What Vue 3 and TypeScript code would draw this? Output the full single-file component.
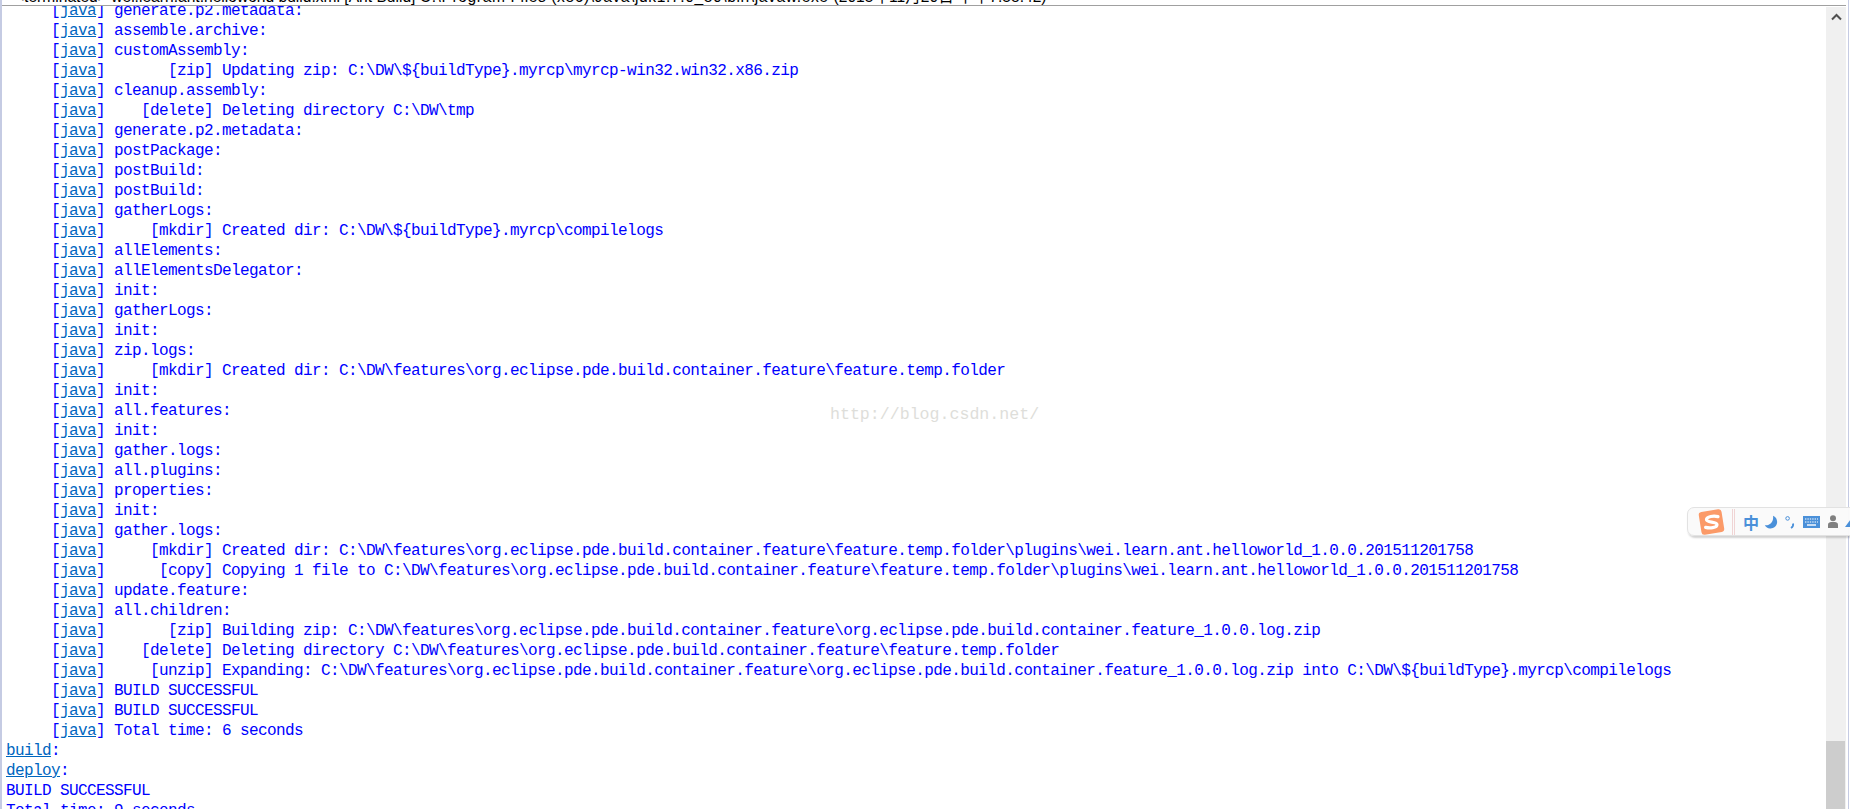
<script setup lang="ts">
interface Line {
  java: boolean
  link?: string
  text: string
}

const feature = 'C:\\DW\\features\\org.eclipse.pde.build.container.feature'
const tempFolder = feature + '\\feature.temp.folder'
const logZip = feature + '\\org.eclipse.pde.build.container.feature_1.0.0.log.zip'
const pluginDir = tempFolder + '\\plugins\\wei.learn.ant.helloworld_1.0.0.201511201758'

const javaLines: string[] = [
  'generate.p2.metadata:',
  'assemble.archive:',
  'customAssembly:',
  '      [zip] Updating zip: C:\\DW\\${buildType}.myrcp\\myrcp-win32.win32.x86.zip',
  'cleanup.assembly:',
  '   [delete] Deleting directory C:\\DW\\tmp',
  'generate.p2.metadata:',
  'postPackage:',
  'postBuild:',
  'postBuild:',
  'gatherLogs:',
  '    [mkdir] Created dir: C:\\DW\\${buildType}.myrcp\\compilelogs',
  'allElements:',
  'allElementsDelegator:',
  'init:',
  'gatherLogs:',
  'init:',
  'zip.logs:',
  '    [mkdir] Created dir: ' + tempFolder,
  'init:',
  'all.features:',
  'init:',
  'gather.logs:',
  'all.plugins:',
  'properties:',
  'init:',
  'gather.logs:',
  '    [mkdir] Created dir: ' + pluginDir,
  '     [copy] Copying 1 file to ' + pluginDir,
  'update.feature:',
  'all.children:',
  '      [zip] Building zip: ' + logZip,
  '   [delete] Deleting directory ' + tempFolder,
  '    [unzip] Expanding: ' + logZip + ' into C:\\DW\\${buildType}.myrcp\\compilelogs',
  'BUILD SUCCESSFUL',
  'BUILD SUCCESSFUL',
  'Total time: 6 seconds',
]

const lines: Line[] = [
  ...javaLines.map((text) => ({ java: true, text })),
  { java: false, link: 'build', text: ':' },
  { java: false, link: 'deploy', text: ':' },
  { java: false, text: 'BUILD SUCCESSFUL' },
  { java: false, text: 'Total time: 9 seconds' },
]

const titleName = '<terminated> wei.learn.ant.helloworld build.xml [Ant Build] '
const titlePath = 'C:\\Program Files (x86)\\Java\\jdk1.7.0_80\\bin\\javaw.exe '
const titleDate = '(2015年11月20日 下午7:58:42)'
</script>

<template>
  <div class="view">
    <div class="pane">
      <header class="title"><span>{{ titleName }}</span><span class="title-path">{{ titlePath }}</span><span>{{ titleDate }}</span></header>
      <div class="body">
        <main class="console">
          <div class="scroller">
            <div v-for="(line, i) in lines" :key="i" class="row">
              <template v-if="line.java"><span>{{ '     [' }}</span><a class="link">java</a><span>{{ '] ' + line.text }}</span></template>
              <template v-else><a v-if="line.link" class="link">{{ line.link }}</a><span>{{ line.text }}</span></template>
            </div>
          </div>
        </main>
        <aside class="scrollbar">
          <svg class="arrow" width="11" height="8" viewBox="0 0 11 8">
            <path d="M1 6.5 L5.5 2 L10 6.5" fill="none" stroke="#505050" stroke-width="2" />
          </svg>
          <div class="thumb"></div>
        </aside>
      </div>
    </div>

    <div class="watermark">http://blog.csdn.net/</div>

    <div class="ime">
      <svg class="ime-logo" width="30" height="28" viewBox="0 0 30 28">
        <rect x="3" y="2.5" width="23" height="23" rx="3" fill="#fb9a68" transform="rotate(-9 14.5 14)" />
        <path d="M21 8.6 C17 7.6 9.5 8.2 9.5 11.6 C9.5 15 20 13.2 20 16.8 C20 20 12.5 20.4 8.6 19.4" fill="none" stroke="#fff" stroke-width="3.2" stroke-linecap="round" />
      </svg>
      <span class="ime-sep"></span>
      <span class="ime-zh">中</span>
      <svg class="ime-ic moon" width="14" height="14" viewBox="0 0 14 14">
        <path d="M9 0.8 A6.6 6.6 0 1 1 0.8 10.2 C5.5 11 10 7 9 0.8 Z" fill="#4a90d9" />
      </svg>
      <svg class="ime-ic punct" width="10" height="14" viewBox="0 0 10 14">
        <circle cx="2.6" cy="3.4" r="1.8" fill="none" stroke="#4a90d9" stroke-width="1" />
        <path d="M8 8.5 C8.6 10.5 7.6 12 6 13" fill="none" stroke="#4a90d9" stroke-width="1.8" />
      </svg>
      <svg class="ime-ic keys" width="17" height="12" viewBox="0 0 17 12">
        <rect width="17" height="12" fill="#4a90d9" />
        <path d="M2 3 H15 M2 6 H15" stroke="#fff" stroke-width="1.2" stroke-dasharray="1.4 1" />
        <path d="M4 9 H13" stroke="#fff" stroke-width="1.4" />
      </svg>
      <svg class="ime-ic person" width="10" height="13" viewBox="0 0 10 13">
        <circle cx="5" cy="3.2" r="3" fill="#808080" />
        <path d="M0 13 V9.5 C0 7.5 2 7 5 7 C8 7 10 7.5 10 9.5 V13 Z" fill="#808080" />
      </svg>
      <svg class="ime-ic tail" width="6" height="10" viewBox="0 0 6 10">
        <path d="M0 10 L6 2 V10 Z" fill="#4a90d9" />
      </svg>
    </div>
  </div>
</template>

<style scoped>
.view {
  position: relative;
  width: 1850px;
  height: 809px;
  overflow: hidden;
  background: #fff;
  font-family: "Liberation Mono", monospace;
}

.pane {
  display: flex;
  flex-direction: column;
  width: 1849px;
  height: 809px;
  box-sizing: border-box;
  padding-right: 2px;
  border-left: 2px solid #c5cbe3;
  border-right: 1px solid #c5cbe3;
}

.title {
  display: flex;
  align-items: flex-end;
  flex: none;
  height: 5px;
  overflow: hidden;
  padding-left: 13px;
  border-bottom: 1px solid #a0a0a0;
  font-family: "Liberation Sans", "Noto Sans CJK SC", sans-serif;
  font-size: 15.6px;
  line-height: 17px;
  white-space: pre;
  color: #000;
}

.title-path {
  letter-spacing: 0.6px;
}

.body {
  display: flex;
  flex: 1;
  min-height: 0;
}

.console {
  flex: 1;
  min-width: 0;
  overflow: hidden;
}

.scroller {
  margin-top: -5px;
  padding-left: 4px;
}

.row {
  height: 20px;
  font-size: 16px;
  letter-spacing: -0.6px;
  line-height: 20px;
  white-space: pre;
  color: #0000ff;
}

.link {
  color: #0066bf;
  text-decoration: underline;
}

.scrollbar {
  display: flex;
  flex-direction: column;
  align-items: center;
  flex: none;
  width: 20px;
  background: #f0f0f0;
  margin-top: 1px;
}

.arrow {
  margin-top: 6px;
}

.thumb {
  align-self: stretch;
  margin-top: auto;
  margin-right: 1px;
  height: 68px;
  background: #cdcdcd;
}

.watermark {
  position: absolute;
  left: 830px;
  top: 405px;
  font-size: 16.6px;
  line-height: 20px;
  color: #dededa;
  white-space: pre;
}

.ime {
  position: absolute;
  left: 1687px;
  top: 507px;
  width: 175px;
  height: 29px;
  display: flex;
  align-items: center;
  box-sizing: border-box;
  border: 1px solid #e2e2e2;
  border-radius: 7px;
  background: rgba(250, 250, 250, 0.96);
  box-shadow: 1px 2px 2px rgba(0, 0, 0, 0.18);
}

.ime-logo {
  flex: none;
  margin-left: 9px;
}

.ime-sep {
  flex: none;
  width: 3px;
  height: 26px;
  margin-left: 5px;
  border-left: 1px solid #f0d4d4;
  border-right: 1px solid #f0d4d4;
  box-sizing: border-box;
}

.ime-zh {
  flex: none;
  margin-left: 8px;
  font-family: "Noto Sans CJK SC", sans-serif;
  font-size: 16px;
  line-height: 20px;
  font-weight: 700;
  color: #4a90d9;
}

.ime-ic {
  flex: none;
}

.moon {
  margin-left: 5px;
}

.punct {
  margin-left: 7px;
}

.keys {
  margin-left: 8px;
}

.person {
  margin-left: 8px;
}

.tail {
  margin-left: 7px;
}
</style>
